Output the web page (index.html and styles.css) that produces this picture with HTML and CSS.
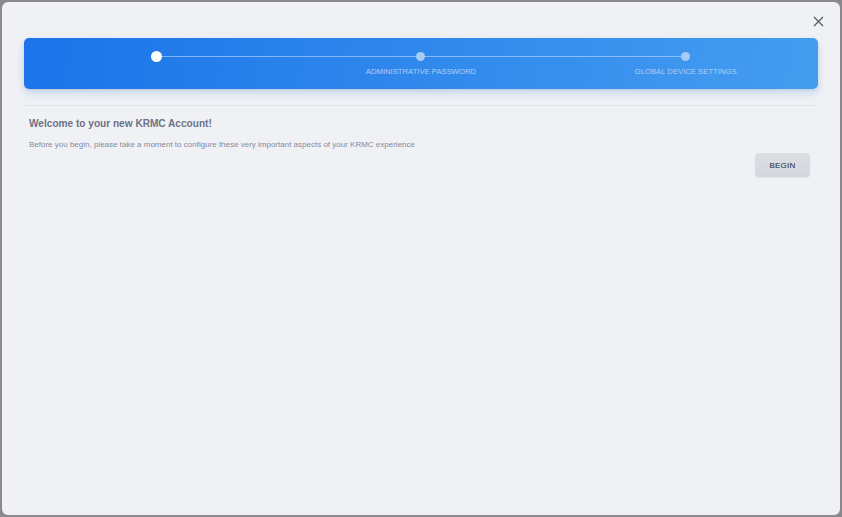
FILE: index.html
```html
<!DOCTYPE html>
<html>
<head>
<meta charset="utf-8">
<link rel="stylesheet" href="styles.css">
</head>
<body>
<div class="modal">
  <div class="modal-top">
    <button class="close" aria-label="Close">
      <svg width="11" height="11" viewBox="0 0 11 11"><path d="M1 1L10 10M10 1L1 10" stroke="#555a63" stroke-width="1.3" fill="none"/></svg>
    </button>
  </div>
  <div class="stepper">
    <div class="step active"><span class="dot"></span><span class="label"></span></div>
    <div class="step"><span class="dot"></span><span class="label">ADMINISTRATIVE PASSWORD</span></div>
    <div class="step"><span class="dot"></span><span class="label">GLOBAL DEVICE SETTINGS</span></div>
  </div>
  <div class="divider"></div>
  <div class="content">
    <h1 class="title">Welcome to your new KRMC Account!</h1>
    <p class="subtitle">Before you begin, please take a moment to configure these very important aspects of your KRMC experience</p>
    <div class="actions">
      <button class="btn">BEGIN</button>
    </div>
  </div>
</div>
</body>
</html>
```
FILE: styles.css
```css
html, body {
  margin: 0;
  padding: 0;
}
body {
  background: #8a8a8c;
  width: 842px;
  height: 517px;
  padding: 2px;
  box-sizing: border-box;
  font-family: "Liberation Sans", Arial, sans-serif;
}
.modal {
  width: 838px;
  height: 513px;
  background: #f0f1f5;
  border-radius: 6px;
  box-sizing: border-box;
  padding: 0 22px;
  display: flex;
  flex-direction: column;
}
.modal-top {
  height: 36px;
  display: flex;
  justify-content: flex-end;
  align-items: flex-start;
}
.close {
  background: none;
  border: 0;
  padding: 0;
  margin: 14px -6px 0 0;
  width: 11px;
  height: 11px;
  display: block;
  cursor: pointer;
}
.close svg { display: block; }
.stepper {
  height: 51px;
  border-radius: 5px;
  background: linear-gradient(100deg, #1b74e9 0%, #2e86ec 45%, #459df0 100%);
  box-shadow: 0 4px 8px rgba(40, 120, 200, 0.22), 0 1px 2px rgba(0,0,0,0.08);
  display: grid;
  grid-template-columns: 1fr 1fr 1fr;
}
.step {
  position: relative;
  display: flex;
  flex-direction: column;
  align-items: center;
  padding-top: 14px;
}
.step + .step::before {
  content: "";
  position: absolute;
  top: 18px;
  left: -50%;
  width: 100%;
  height: 1px;
  background: rgba(190, 220, 255, 0.6);
}
.dot {
  position: relative;
  z-index: 1;
  width: 9px;
  height: 9px;
  border-radius: 50%;
  background: #a7cbf6;
}
.step.active .dot {
  width: 11px;
  height: 11px;
  margin-top: -1px;
  margin-bottom: -1px;
  background: #ffffff;
}
.label {
  margin-top: 6px;
  font-size: 7.7px;
  line-height: 10px;
  color: #acd0f7;
  white-space: nowrap;
}
.divider {
  height: 1px;
  background: #e2e4ea;
  margin: 16px 0 0 0;
}
.content {
  padding: 0 8px 0 5px;
  display: flex;
  flex-direction: column;
}
.title {
  margin: 11px 0 0 0;
  font-size: 10.1px;
  line-height: 14px;
  font-weight: bold;
  color: #6e7288;
}
.subtitle {
  margin: 9px 0 0 0;
  font-size: 8px;
  line-height: 10px;
  color: #858a9e;
}
.actions {
  display: flex;
  justify-content: flex-end;
  margin-top: 3px;
}
.btn {
  width: 55px;
  height: 24px;
  border: 0;
  border-radius: 4px;
  background: linear-gradient(180deg, #dcdfe4 0%, #d3d7dd 100%);
  box-shadow: 0 1px 2px rgba(0,0,0,0.06);
  font-family: "Liberation Sans", Arial, sans-serif;
  font-size: 8px;
  letter-spacing: 0.2px;
  color: #24272c;
  padding: 0;
}
```
